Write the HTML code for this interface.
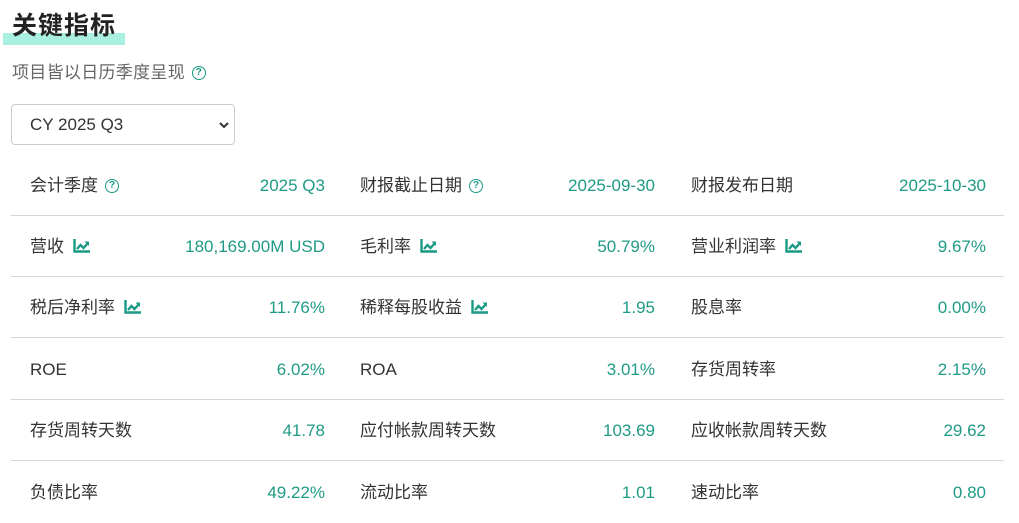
<!DOCTYPE html>
<html><head><meta charset="utf-8"><style>
*{margin:0;padding:0;box-sizing:border-box}
body{width:1019px;height:519px;background:#fff;font-family:"Liberation Sans","Noto Sans CJK SC",sans-serif;color:#333;position:relative;overflow:hidden}
.hl{position:absolute;left:3px;top:33px;width:122px;height:12px;background:#aaf0e0}
h1{position:absolute;left:12px;top:11px;font-size:25px;font-weight:bold;color:#222;letter-spacing:1px;line-height:30px}
.sub{position:absolute;left:12px;top:62px;font-size:17px;color:#666;line-height:22px;letter-spacing:0.3px}
.q{display:inline-block;width:14px;height:14px;border:1.8px solid #1a9a84;border-radius:50%;font-size:10px;line-height:11px;text-align:center;color:#1a9a84;font-weight:bold;vertical-align:middle;margin-left:7px;position:relative;top:-1px}
.sel{position:absolute;left:11px;top:104px;width:224px;height:41px;border:1px solid #ccc;border-radius:4px;font-size:17px;line-height:39px;padding-left:18px;color:#333}
.sel svg{position:absolute;right:4px;top:15px}
.row{position:absolute;left:11px;width:993px;height:61px;border-bottom:1px solid #d6d6d6}
.c{position:absolute;top:0;height:61px;width:331px;font-size:17px;line-height:61px}
.l{position:absolute;left:19px;color:#333}
.v{position:absolute;right:17px;color:#1f9a86}
.ic{display:inline-block;vertical-align:middle;margin-left:9px;position:relative;top:-2px}
</style></head><body>
<div class="hl"></div>
<h1>关键指标</h1>
<div class="sub">项目皆以日历季度呈现<span class="q">?</span></div>
<div class="sel">CY 2025 Q3<svg width="12" height="10" viewBox="0 0 12 10"><path d="M2 3l4 4 4-4" stroke="#333" stroke-width="2" fill="none"/></svg></div>

<div class="row" style="top:155px">
<div class="c" style="left:0"><span class="l">会计季度<span class="q">?</span></span><span class="v">2025 Q3</span></div>
<div class="c" style="left:330px"><span class="l">财报截止日期<span class="q">?</span></span><span class="v">2025-09-30</span></div>
<div class="c" style="left:661px"><span class="l">财报发布日期</span><span class="v">2025-10-30</span></div>
</div>
<div class="row" style="top:216px">
<div class="c" style="left:0"><span class="l">营收<svg class="ic" width="17" height="14" viewBox="0 0 17 14"><path d="M1.5 0v12.5H17" stroke="#1a9a84" stroke-width="2.4" fill="none"/><path d="M4 10l3.5-4 3 3L15 4" stroke="#1a9a84" stroke-width="2.4" fill="none"/><path d="M11.5 2.5H16V7z" fill="#1a9a84"/></svg></span><span class="v">180,169.00M USD</span></div>
<div class="c" style="left:330px"><span class="l">毛利率<svg class="ic" width="17" height="14" viewBox="0 0 17 14"><path d="M1.5 0v12.5H17" stroke="#1a9a84" stroke-width="2.4" fill="none"/><path d="M4 10l3.5-4 3 3L15 4" stroke="#1a9a84" stroke-width="2.4" fill="none"/><path d="M11.5 2.5H16V7z" fill="#1a9a84"/></svg></span><span class="v">50.79%</span></div>
<div class="c" style="left:661px"><span class="l">营业利润率<svg class="ic" width="17" height="14" viewBox="0 0 17 14"><path d="M1.5 0v12.5H17" stroke="#1a9a84" stroke-width="2.4" fill="none"/><path d="M4 10l3.5-4 3 3L15 4" stroke="#1a9a84" stroke-width="2.4" fill="none"/><path d="M11.5 2.5H16V7z" fill="#1a9a84"/></svg></span><span class="v">9.67%</span></div>
</div>
<div class="row" style="top:277px">
<div class="c" style="left:0"><span class="l">税后净利率<svg class="ic" width="17" height="14" viewBox="0 0 17 14"><path d="M1.5 0v12.5H17" stroke="#1a9a84" stroke-width="2.4" fill="none"/><path d="M4 10l3.5-4 3 3L15 4" stroke="#1a9a84" stroke-width="2.4" fill="none"/><path d="M11.5 2.5H16V7z" fill="#1a9a84"/></svg></span><span class="v">11.76%</span></div>
<div class="c" style="left:330px"><span class="l">稀释每股收益<svg class="ic" width="17" height="14" viewBox="0 0 17 14"><path d="M1.5 0v12.5H17" stroke="#1a9a84" stroke-width="2.4" fill="none"/><path d="M4 10l3.5-4 3 3L15 4" stroke="#1a9a84" stroke-width="2.4" fill="none"/><path d="M11.5 2.5H16V7z" fill="#1a9a84"/></svg></span><span class="v">1.95</span></div>
<div class="c" style="left:661px"><span class="l">股息率</span><span class="v">0.00%</span></div>
</div>
<div class="row" style="top:339px">
<div class="c" style="left:0"><span class="l">ROE</span><span class="v">6.02%</span></div>
<div class="c" style="left:330px"><span class="l">ROA</span><span class="v">3.01%</span></div>
<div class="c" style="left:661px"><span class="l">存货周转率</span><span class="v">2.15%</span></div>
</div>
<div class="row" style="top:400px">
<div class="c" style="left:0"><span class="l">存货周转天数</span><span class="v">41.78</span></div>
<div class="c" style="left:330px"><span class="l">应付帐款周转天数</span><span class="v">103.69</span></div>
<div class="c" style="left:661px"><span class="l">应收帐款周转天数</span><span class="v">29.62</span></div>
</div>
<div class="row" style="top:462px;border-bottom:none">
<div class="c" style="left:0"><span class="l">负债比率</span><span class="v">49.22%</span></div>
<div class="c" style="left:330px"><span class="l">流动比率</span><span class="v">1.01</span></div>
<div class="c" style="left:661px"><span class="l">速动比率</span><span class="v">0.80</span></div>
</div>
</body></html>
